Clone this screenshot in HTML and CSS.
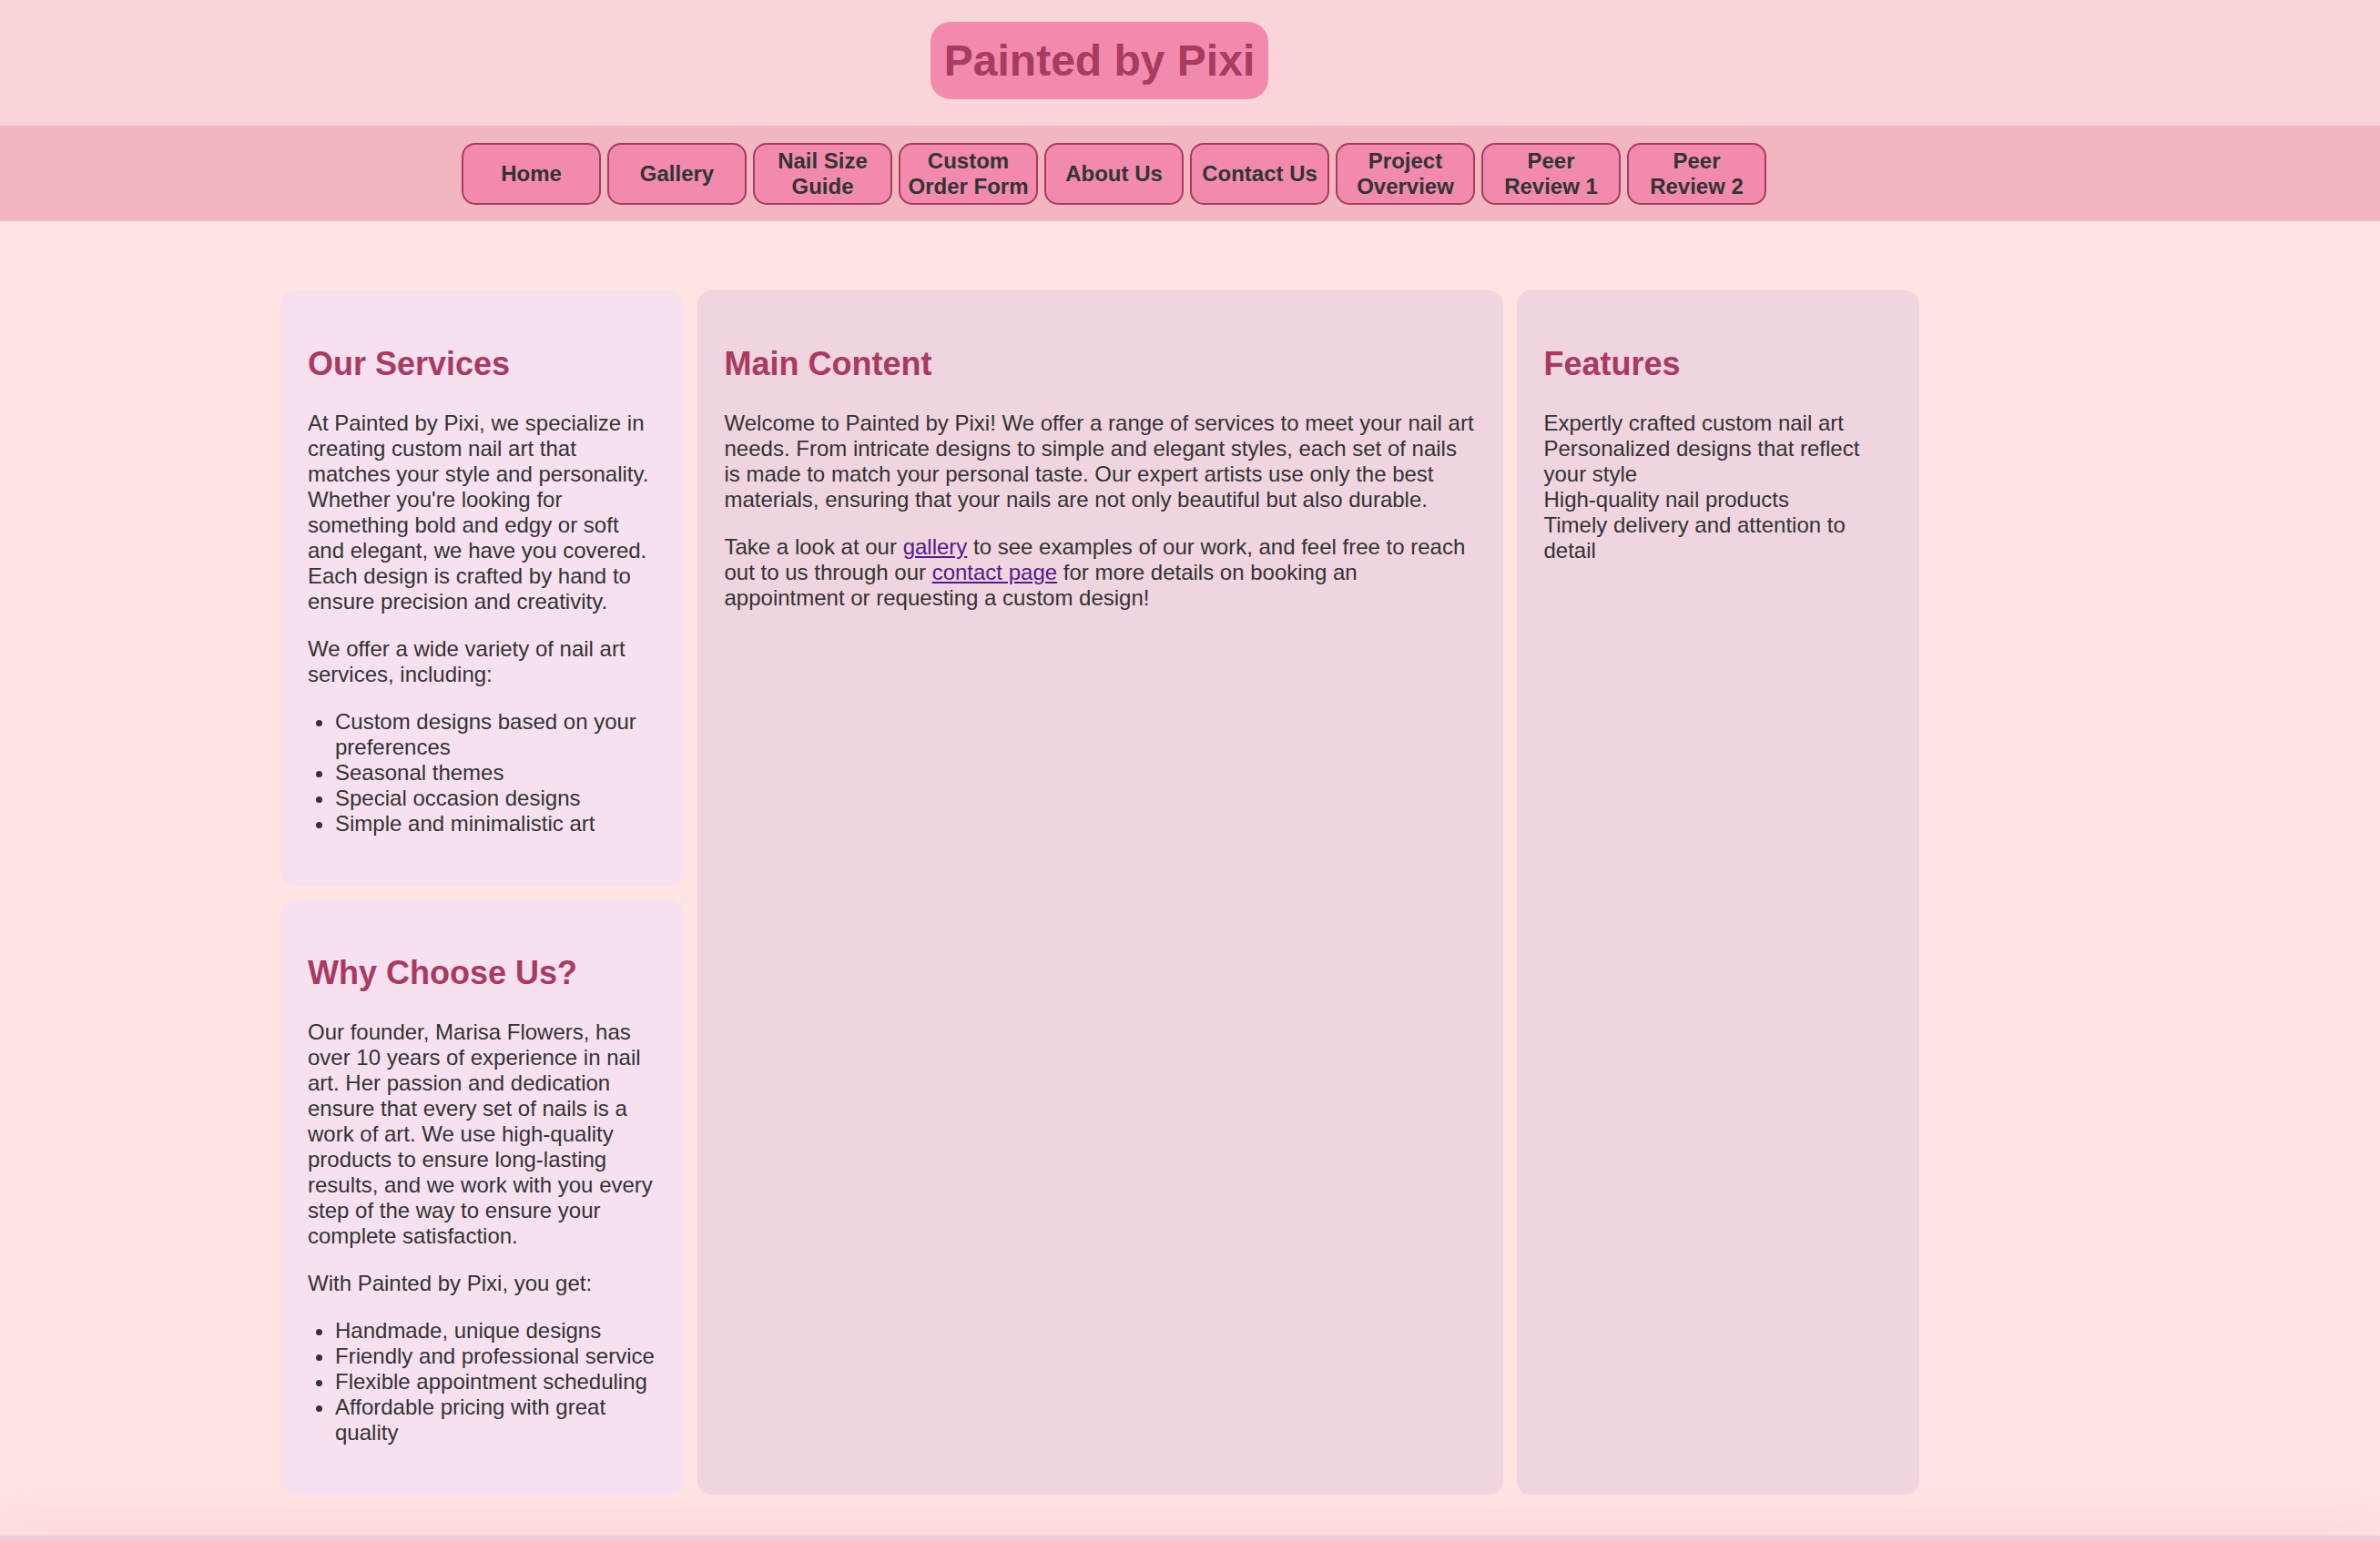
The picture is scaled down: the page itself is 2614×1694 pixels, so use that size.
FILE: index.html
```html
<!DOCTYPE html>
<html lang="en">
<head>
<meta charset="utf-8">
<title>Painted by Pixi</title>
<link rel="stylesheet" href="styles.css">
</head>
<body>
<header class="site-header">
  <h1 class="logo">Painted by Pixi</h1>
</header>
<nav class="site-nav">
  <ul class="nav-list">
    <li><a class="nav-btn" href="#">Home</a></li>
    <li><a class="nav-btn" href="#">Gallery</a></li>
    <li><a class="nav-btn" href="#">Nail Size Guide</a></li>
    <li><a class="nav-btn" href="#">Custom Order Form</a></li>
    <li><a class="nav-btn" href="#">About Us</a></li>
    <li><a class="nav-btn" href="#">Contact Us</a></li>
    <li><a class="nav-btn" href="#">Project Overview</a></li>
    <li><a class="nav-btn" href="#">Peer Review 1</a></li>
    <li><a class="nav-btn" href="#">Peer Review 2</a></li>
  </ul>
</nav>
<main class="layout">
  <div class="sidebar">
    <section class="card card-light">
      <h2>Our Services</h2>
      <p>At Painted by Pixi, we specialize in creating custom nail art that matches your style and personality. Whether you're looking for something bold and edgy or soft and elegant, we have you covered. Each design is crafted by hand to ensure precision and creativity.</p>
      <p>We offer a wide variety of nail art services, including:</p>
      <ul class="bullets">
        <li>Custom designs based on your preferences</li>
        <li>Seasonal themes</li>
        <li>Special occasion designs</li>
        <li>Simple and minimalistic art</li>
      </ul>
    </section>
    <section class="card card-light">
      <h2>Why Choose Us?</h2>
      <p>Our founder, Marisa Flowers, has over 10 years of experience in nail art. Her passion and dedication ensure that every set of nails is a work of art. We use high-quality products to ensure long-lasting results, and we work with you every step of the way to ensure your complete satisfaction.</p>
      <p>With Painted by Pixi, you get:</p>
      <ul class="bullets">
        <li>Handmade, unique designs</li>
        <li>Friendly and professional service</li>
        <li>Flexible appointment scheduling</li>
        <li>Affordable pricing with great quality</li>
      </ul>
    </section>
  </div>
  <section class="card card-mid">
    <h2>Main Content</h2>
    <p>Welcome to Painted by Pixi! We offer a range of services to meet your nail art needs. From intricate designs to simple and elegant styles, each set of nails is made to match your personal taste. Our expert artists use only the best materials, ensuring that your nails are not only beautiful but also durable.</p>
    <p>Take a look at our <a class="text-link" href="#">gallery</a> to see examples of our work, and feel free to reach out to us through our <a class="text-link" href="#">contact page</a> for more details on booking an appointment or requesting a custom design!</p>
  </section>
  <section class="card card-mid">
    <h2>Features</h2>
    <ul class="plain">
      <li>Expertly crafted custom nail art</li>
      <li>Personalized designs that reflect your style</li>
      <li>High-quality nail products</li>
      <li>Timely delivery and attention to detail</li>
    </ul>
  </section>
</main>
<footer class="site-footer"></footer>
</body>
</html>
```
FILE: styles.css
```css
html, body {
  margin: 0;
  padding: 0;
}
body {
  background: #ffe4e1;
  color: #333333;
  font-family: "Liberation Sans", Arial, sans-serif;
  font-size: 24px;
  overflow: hidden;
}
.site-header {
  background: #f9d5da;
  padding: 24px 199px 29px 0;
  display: flex;
  justify-content: center;
}
.logo {
  margin: 0;
  font-size: 48px;
  font-weight: bold;
  color: #a93a60;
  background: #f28aad;
  padding: 15px 15px;
  border-radius: 22px;
  line-height: normal;
}
.site-nav {
  background: #f2b6c1;
  padding: 19px 0 18px;
}
.nav-list {
  list-style: none;
  margin: 0;
  padding: 0 0 0 507px;
  display: flex;
  gap: 7px;
}
.nav-list li {
  display: flex;
}
.nav-btn {
  box-sizing: border-box;
  width: 153px;
  height: 68px;
  display: flex;
  align-items: center;
  justify-content: center;
  text-align: center;
  background: #f28aad;
  border: 2px solid #a93a60;
  border-radius: 15px;
  color: #333333;
  font-weight: bold;
  font-size: 24px;
  text-decoration: none;
  padding: 0 6px;
}
.layout {
  width: 1800px;
  margin: 76px 0 0 308px;
  display: grid;
  grid-template-columns: 1fr 2fr 1fr;
  gap: 15px;
}
.sidebar {
  display: flex;
  flex-direction: column;
  gap: 15px;
}
.card {
  border-radius: 15px;
  padding: 30px;
  line-height: 28px;
}
.card-light {
  background: #f7e1f0;
}
.card-mid {
  background: #f0d5e0;
}
.card h2 {
  color: #a93a60;
  font-size: 36px;
  margin: 30px 0 30px;
  line-height: normal;
}
.card p {
  margin: 24px 0;
}
.bullets {
  margin: 24px 0;
  padding-left: 30px;
}
.plain {
  list-style: none;
  margin: 24px 0;
  padding: 0;
}
.text-link {
  color: #551a8b;
}
.site-footer {
  margin-top: 45px;
  height: 60px;
  background: #f0cdd5;
  box-shadow: 0 -18px 40px rgba(245, 205, 210, 0.45);
}
```
